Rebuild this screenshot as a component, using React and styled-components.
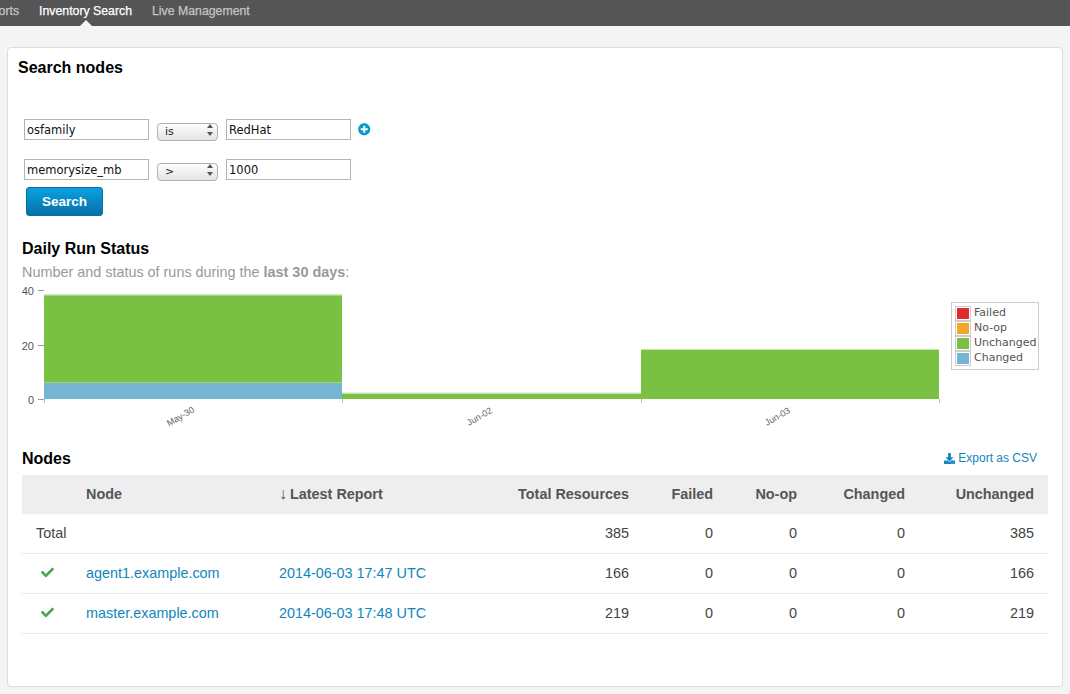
import React from 'react'
import styled, { createGlobalStyle } from 'styled-components'
import { FaCheck, FaDownload, FaPlusCircle } from 'react-icons/fa'

const GlobalStyle = createGlobalStyle`
html, body {
  margin: 0;
  padding: 0;
  background: #f4f4f4;
  font-family: "Liberation Sans", Arial, sans-serif;
}`

const Page = styled.div`
width: 1070px;
height: 694px;
overflow: hidden;`

const NavBar = styled.nav`
height: 26px;
background-color: #555;
overflow: hidden;`

const NavList = styled.div`
display: flex;
gap: 20px;
margin-left: -24px;`

const NavItem = styled.a`
position: relative;
display: block;
height: 26px;
line-height: 22px;
font-size: 12.3px;
-webkit-text-stroke: 0.25px currentColor;
white-space: nowrap;
color: ${props => props.active ? "#fff" : "#c4c4c4"};
${props => props.active && `
  &::after {
    content: "";
    position: absolute;
    left: 50%;
    bottom: 0;
    margin-left: -6px;
    border: 6px solid transparent;
    border-top: 0;
    border-bottom-color: #f4f4f4;
  }
`}`

const Card = styled.main`
box-sizing: border-box;
height: 640px;
margin: 21px 7px 0;
padding: 11px 15px 0 10px;
background-color: #fff;
border: 1px solid #dcdcdc;
border-radius: 4px;`

const PageTitle = styled.h1`
margin: 0;
font-size: 16px;
line-height: 18px;
color: #000;`

const SearchForm = styled.form`
margin: 42px 0 0 6px;`

const QueryRow = styled.div`
display: flex;
align-items: center;
gap: 8px;
height: 21px;
margin-bottom: 19px;`

const TextInput = styled.input`
box-sizing: border-box;
width: 125px;
height: 21px;
padding: 0 2px;
border: 1px solid #b5b5b5;
border-radius: 0;
outline: none;
font-family: "DejaVu Sans", sans-serif;
font-size: 11.5px;
color: #111;`

const SelectWrap = styled.div`
position: relative;
width: 61px;
height: 18px;
&::before, &::after {
  content: "";
  position: absolute;
  right: 5px;
  border: 3px solid transparent;
  pointer-events: none;
}
&::before {
  top: 3px;
  border-top: 0;
  border-bottom: 4px solid #555;
}
&::after {
  bottom: 3px;
  border-bottom: 0;
  border-top: 4px solid #555;
}`

const Select = styled.select`
appearance: none;
box-sizing: border-box;
width: 100%;
height: 18px;
padding: 0 0 1px 7px;
border: 1px solid #b0b0b0;
border-radius: 4px;
outline: none;
background: linear-gradient(#fff, #f0f0f0 50%, #e4e4e4);
font-family: "DejaVu Sans", sans-serif;
font-size: 11px;
color: #222;`

const AddButton = styled.span`
display: flex;
margin-left: -1px;
font-size: 12.5px;
color: #0a9ac9;`

const SearchButton = styled.button`
display: block;
box-sizing: border-box;
width: 77px;
height: 29px;
margin: -12px 0 0 2px;
padding: 0 0 1px;
border: 1px solid #0a6ea3;
border-radius: 3px;
background: linear-gradient(#0ba0e0, #0572a8);
font-family: "Liberation Sans", Arial, sans-serif;
font-size: 13.5px;
font-weight: bold;
color: #fff;`

const Section = styled.section`
margin: 24px 0 0 4px;`

const SectionTitle = styled.h2`
margin: 0;
font-size: 16px;
line-height: 18px;
color: #000;`

const Subtitle = styled.p`
margin: 6px 0 0;
font-size: 14.4px;
line-height: 16px;
color: #999;
b {
  font-weight: bold;
}`

const ChartRow = styled.div`
display: flex;
align-items: flex-start;
margin: 5px 0 0 -3px;`

const ChartSvg = styled.svg`
display: block;
flex: none;`

const Legend = styled.div`
flex: none;
box-sizing: border-box;
width: 88px;
height: 68px;
margin: 17px 0 0 7px;
padding: 3px 0 0 3px;
border: 1px solid #ccc;`

const LegendRow = styled.div`
display: flex;
align-items: flex-start;
gap: 3px;
height: 15px;
line-height: 13px;
font-family: "DejaVu Sans", sans-serif;
font-size: 11px;
color: #545454;
white-space: nowrap;`

const LegendSwatch = styled.span`
box-sizing: border-box;
flex: none;
width: 16px;
height: 15px;
border: 1px solid #ccc;
padding: 1px;
&::before {
  content: "";
  display: block;
  height: 100%;
  background-color: ${props => props.color};
}`

const NodesHead = styled.div`
display: flex;
justify-content: space-between;
align-items: center;
height: 18px;
margin-top: 17px;`

const ExportLink = styled.a`
display: flex;
align-items: center;
gap: 3px;
margin: 0 10px 2px 0;
font-size: 12px;
color: #0f87bb;
svg {
  font-size: 11px;
}`

const NodesTable = styled.table`
width: 1026px;
margin-top: 7px;
border-collapse: separate;
border-spacing: 0;
table-layout: fixed;
font-size: 14.4px;
color: #444;`

const HeadRow = styled.tr`
height: 39px;
background-color: #eee;`

const HeadCell = styled.th`
padding: 0 14px 2px;
font-weight: bold;
color: #555;
white-space: nowrap;
text-align: ${props => props.right ? "right" : "left"};`

const BodyRow = styled.tr`
height: 40px;`

const Cell = styled.td`
box-sizing: border-box;
padding: 0 14px 2px;
border-bottom: 1px solid #eaeaea;
white-space: nowrap;
text-align: ${props => props.right ? "right" : "left"};`

const StatusIcon = styled.span`
display: flex;
font-size: 13px;
margin-left: 5px;
color: #4ea64a;`

const CellLink = styled.a`
color: #0f87bb;`

const SortArrow = styled.span`
font-weight: normal;
font-size: 16px;
line-height: 14px;
margin-right: 3px;`

const series = [
  { x: 44, w: 298, changed: 6, unchanged: 32 },
  { x: 342, w: 299, changed: 0, unchanged: 2 },
  { x: 641, w: 298, changed: 0, unchanged: 18 },
]

const legend = [
  { label: "Failed", color: "#dd2c2c" },
  { label: "No-op", color: "#f0a72a" },
  { label: "Unchanged", color: "#7ac143" },
  { label: "Changed", color: "#75b5d3" },
]

const nodes = [
  { name: "agent1.example.com", report: "2014-06-03 17:47 UTC", total: 166 },
  { name: "master.example.com", report: "2014-06-03 17:48 UTC", total: 219 },
]

// chart origin: y=0 sits at 114px in the svg, 2.73px per run
const toY = value => 114 - value * 2.73

const RunChart = () => (
  <ChartSvg width="925" height="148" viewBox="19 0 925 148">
    {series.map(bar => (
      <g key={bar.x}>
        <rect x={bar.x} y={toY(bar.changed + bar.unchanged)} width={bar.w} height={bar.unchanged * 2.73} fill="#7ac143" />
        {bar.changed > 0 && <rect x={bar.x} y={toY(bar.changed)} width={bar.w} height={bar.changed * 2.73} fill="#75b5d3" />}
        {bar.changed > 0 && <line x1={bar.x} x2={bar.x + bar.w} y1={toY(bar.changed)} y2={toY(bar.changed)} stroke="#a6d48a" />}
        <line x1={bar.x} x2={bar.x + bar.w} y1={toY(bar.changed + bar.unchanged) - 0.5} y2={toY(bar.changed + bar.unchanged) - 0.5} stroke="#c4e0b0" />
      </g>
    ))}
    {[44.5, 342.5, 641.5, 939.5].map(x => (
      <line key={x} x1={x} x2={x} y1="114" y2="118" stroke="#bbb" />
    ))}
    {[[40, 5.5], [20, 60.5], [0, 114.5]].map(([label, y]) => (
      <g key={label}>
        <line x1="38" x2="44" y1={y} y2={y} stroke="#999" />
        <text x="34" y={y + 4} textAnchor="end" fontFamily="Liberation Sans" fontSize="11" fill="#555">{label}</text>
      </g>
    ))}
    {[["May-30", 182, 134], ["Jun-02", 481, 134], ["Jun-03", 779, 134]].map(([label, x, y]) => (
      <text key={label} x={x} y={y} textAnchor="middle" transform={`rotate(-30 ${x} ${y})`} fontFamily="Liberation Sans" fontSize="9" fill="#666">{label}</text>
    ))}
  </ChartSvg>
)

const App = () => {
  return (
    <Page>
      <GlobalStyle />
      <NavBar>
        <NavList>
          <NavItem>Reports</NavItem>
          <NavItem active>Inventory Search</NavItem>
          <NavItem>Live Management</NavItem>
        </NavList>
      </NavBar>
      <Card>
        <PageTitle>Search nodes</PageTitle>
        <SearchForm>
          <QueryRow>
            <TextInput defaultValue="osfamily" />
            <SelectWrap>
              <Select defaultValue="is"><option>is</option></Select>
            </SelectWrap>
            <TextInput defaultValue="RedHat" />
            <AddButton><FaPlusCircle /></AddButton>
          </QueryRow>
          <QueryRow>
            <TextInput defaultValue="memorysize_mb" />
            <SelectWrap>
              <Select defaultValue=">"><option>&gt;</option></Select>
            </SelectWrap>
            <TextInput defaultValue="1000" />
          </QueryRow>
          <SearchButton type="button">Search</SearchButton>
        </SearchForm>
        <Section>
          <SectionTitle>Daily Run Status</SectionTitle>
          <Subtitle>Number and status of runs during the <b>last 30 days</b>:</Subtitle>
          <ChartRow>
            <RunChart />
            <Legend>
              {legend.map(item => (
                <LegendRow key={item.label}>
                  <LegendSwatch color={item.color} />
                  {item.label}
                </LegendRow>
              ))}
            </Legend>
          </ChartRow>
          <NodesHead>
            <SectionTitle>Nodes</SectionTitle>
            <ExportLink><FaDownload />Export as CSV</ExportLink>
          </NodesHead>
          <NodesTable>
            <colgroup>
              <col width="50" />
              <col width="193" />
              <col width="225" />
              <col width="153" />
              <col width="84" />
              <col width="84" />
              <col width="108" />
              <col width="129" />
            </colgroup>
            <thead>
              <HeadRow>
                <HeadCell />
                <HeadCell>Node</HeadCell>
                <HeadCell><SortArrow>↓</SortArrow>Latest Report</HeadCell>
                <HeadCell right>Total Resources</HeadCell>
                <HeadCell right>Failed</HeadCell>
                <HeadCell right>No-op</HeadCell>
                <HeadCell right>Changed</HeadCell>
                <HeadCell right>Unchanged</HeadCell>
              </HeadRow>
            </thead>
            <tbody>
              <BodyRow>
                <Cell>Total</Cell>
                <Cell />
                <Cell />
                <Cell right>385</Cell>
                <Cell right>0</Cell>
                <Cell right>0</Cell>
                <Cell right>0</Cell>
                <Cell right>385</Cell>
              </BodyRow>
              {nodes.map(node => (
                <BodyRow key={node.name}>
                  <Cell><StatusIcon><FaCheck /></StatusIcon></Cell>
                  <Cell><CellLink>{node.name}</CellLink></Cell>
                  <Cell><CellLink>{node.report}</CellLink></Cell>
                  <Cell right>{node.total}</Cell>
                  <Cell right>0</Cell>
                  <Cell right>0</Cell>
                  <Cell right>0</Cell>
                  <Cell right>{node.total}</Cell>
                </BodyRow>
              ))}
            </tbody>
          </NodesTable>
        </Section>
      </Card>
    </Page>
  )
}

export default App
